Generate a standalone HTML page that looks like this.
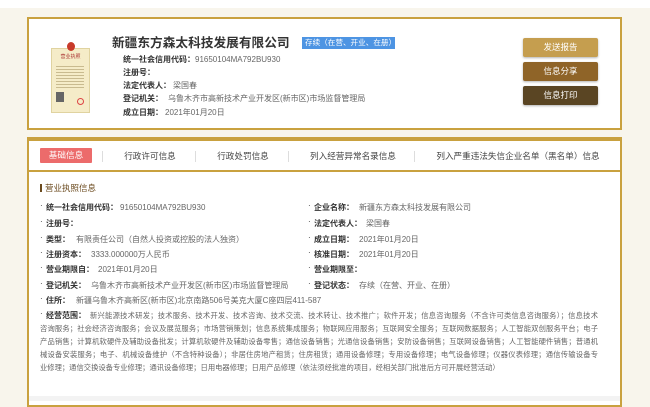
<!DOCTYPE html>
<html><head><meta charset="utf-8"><style>
*{margin:0;padding:0;box-sizing:border-box}
body{width:650px;height:401px;overflow:hidden;background:#f8f5ec;font-family:"Liberation Sans","Noto Sans CJK SC",sans-serif;color:#555;position:relative}
.top{position:absolute;left:0;top:0;width:650px;height:8px;background:#fff}
.c1{position:absolute;left:27px;top:17px;width:595px;height:113px;background:#fff;border:2px solid #c9a13f}
.c2{position:absolute;left:27px;top:137px;width:595px;height:270px;background:#fff;border:2px solid #c9a13f;border-top:4px solid #c9a13f}
.a{position:absolute;white-space:nowrap;font-size:8px;line-height:11px}
.b{font-weight:bold;color:#333}
.v{color:#666}
.btn{position:absolute;left:523px;width:75px;height:19px;color:#fff;font-size:8.5px;line-height:19px;text-align:center;border-radius:2px;box-shadow:0 1px 2px rgba(0,0,0,.3)}
.tab{position:absolute;top:151px;font-size:8.6px;line-height:11px;color:#444;white-space:nowrap;transform:translateX(-50%)}
.sep{position:absolute;top:151px;width:1px;height:11px;background:#ddd}
.sc{position:absolute;left:40px;width:558px;font-size:7.3px;line-height:13px;color:#666;text-align:justify;text-align-last:justify;white-space:nowrap;overflow:hidden}
.dot{position:absolute;font-size:8px;color:#333}
</style></head><body>
<div class="top"></div>
<div class="c1"></div>
<div class="c2"></div>
<div style="position:absolute;left:51px;top:48px;width:39px;height:65px;background:#f5ecc8;border:1px solid #e0d3a0"></div>
<div style="position:absolute;left:67px;top:42px;width:8px;height:9px;border-radius:50%;background:#c83a2a"></div>
<div style="position:absolute;left:56px;top:55px;width:29px;height:5px;font-size:5px;line-height:5px;color:#a33;text-align:center">营业执照</div>
<div style="position:absolute;left:56px;top:64px;width:28px;height:24px;background:repeating-linear-gradient(#f5ecc8 0 2px,#c9bb8f 2px 3px)"></div>
<div style="position:absolute;left:56px;top:92px;width:8px;height:10px;background:#666"></div>
<div style="position:absolute;left:77px;top:98px;width:7px;height:7px;border-radius:50%;border:1px solid #d44"></div>

<div class="a b" style="left:112px;top:35px;font-size:12.7px;line-height:17px;color:#333">新疆东方森太科技发展有限公司</div>
<div class="a" style="left:302px;top:37px;width:93px;height:12px;background:#4d94e3;color:#fff;font-size:7.6px;line-height:12px;padding-left:3px">存续（在营、开业、在册）</div>
<div class="a b" style="left:123px;top:54px">统一社会信用代码：</div><div class="a v" style="left:195px;top:54px">91650104MA792BU930</div>
<div class="a b" style="left:123px;top:67px">注册号：</div>
<div class="a b" style="left:123px;top:80px">法定代表人：</div><div class="a v" style="left:173px;top:80px">梁国春</div>
<div class="a b" style="left:123px;top:93px">登记机关：</div><div class="a v" style="left:168px;top:93px">乌鲁木齐市高新技术产业开发区(新市区)市场监督管理局</div>
<div class="a b" style="left:123px;top:107px">成立日期：</div><div class="a v" style="left:165px;top:107px">2021年01月20日</div>

<div class="btn" style="top:38px;background:#c59e4f">发送报告</div>
<div class="btn" style="top:62px;background:#8f6428">信息分享</div>
<div class="btn" style="top:86px;background:#5a4523">信息打印</div>

<div style="position:absolute;left:40px;top:148px;width:52px;height:15px;background:#ec6b6b;color:#fff;font-size:8.6px;line-height:15px;text-align:center;border-radius:1px">基础信息</div>
<div class="sep" style="left:102px"></div><div class="sep" style="left:195px"></div><div class="sep" style="left:288px"></div><div class="sep" style="left:414px"></div>
<div class="tab" style="left:150px">行政许可信息</div>
<div class="tab" style="left:243px">行政处罚信息</div>
<div class="tab" style="left:353px">列入经营异常名录信息</div>
<div class="tab" style="left:518px">列入严重违法失信企业名单（黑名单）信息</div>
<div style="position:absolute;left:29px;top:170px;width:591px;height:2px;background:#c9a13f"></div>

<div style="position:absolute;left:40px;top:184px;width:2px;height:8px;background:#6b4a1e"></div>
<div class="a" style="left:45px;top:183px;color:#6b4a1e;font-size:8.5px">营业执照信息</div>

<div class="dot" style="left:40px;top:201px">·</div><div class="a b" style="left:46px;top:202px">统一社会信用代码：</div><div class="a v" style="left:120px;top:202px">91650104MA792BU930</div>
<div class="dot" style="left:308px;top:201px">·</div><div class="a b" style="left:314px;top:202px">企业名称：</div><div class="a v" style="left:359px;top:202px">新疆东方森太科技发展有限公司</div>
<div class="dot" style="left:40px;top:217px">·</div><div class="a b" style="left:46px;top:218px">注册号：</div>
<div class="dot" style="left:308px;top:217px">·</div><div class="a b" style="left:314px;top:218px">法定代表人：</div><div class="a v" style="left:366px;top:218px">梁国春</div>
<div class="dot" style="left:40px;top:233px">·</div><div class="a b" style="left:46px;top:234px">类型：</div><div class="a v" style="left:76px;top:234px">有限责任公司（自然人投资或控股的法人独资）</div>
<div class="dot" style="left:308px;top:233px">·</div><div class="a b" style="left:314px;top:234px">成立日期：</div><div class="a v" style="left:359px;top:234px">2021年01月20日</div>
<div class="dot" style="left:40px;top:248px">·</div><div class="a b" style="left:46px;top:249px">注册资本：</div><div class="a v" style="left:91px;top:249px">3333.000000万人民币</div>
<div class="dot" style="left:308px;top:248px">·</div><div class="a b" style="left:314px;top:249px">核准日期：</div><div class="a v" style="left:359px;top:249px">2021年01月20日</div>
<div class="dot" style="left:40px;top:263px">·</div><div class="a b" style="left:46px;top:264px">营业期限自：</div><div class="a v" style="left:98px;top:264px">2021年01月20日</div>
<div class="dot" style="left:308px;top:263px">·</div><div class="a b" style="left:314px;top:264px">营业期限至：</div>
<div class="dot" style="left:40px;top:279px">·</div><div class="a b" style="left:46px;top:280px">登记机关：</div><div class="a v" style="left:91px;top:280px">乌鲁木齐市高新技术产业开发区(新市区)市场监督管理局</div>
<div class="dot" style="left:308px;top:279px">·</div><div class="a b" style="left:314px;top:280px">登记状态：</div><div class="a v" style="left:359px;top:280px">存续（在营、开业、在册）</div>
<div class="dot" style="left:40px;top:294px">·</div><div class="a b" style="left:46px;top:295px">住所：</div><div class="a v" style="left:76px;top:295px">新疆乌鲁木齐高新区(新市区)北京南路506号美克大厦C座四层411-587</div>

<div class="dot" style="left:40px;top:309px">·</div><div class="a b" style="left:46px;top:310px">经营范围：</div>
<div class="sc" style="top:309px;left:90px;width:508px">新兴能源技术研发；技术服务、技术开发、技术咨询、技术交流、技术转让、技术推广；软件开发；信息咨询服务（不含许可类信息咨询服务）；信息技术</div>
<div class="sc" style="top:322px">咨询服务；社会经济咨询服务；会议及展览服务；市场营销策划；信息系统集成服务；物联网应用服务；互联网安全服务；互联网数据服务；人工智能双创服务平台；电子</div>
<div class="sc" style="top:335px">产品销售；计算机软硬件及辅助设备批发；计算机软硬件及辅助设备零售；通信设备销售；光通信设备销售；安防设备销售；互联网设备销售；人工智能硬件销售；普通机</div>
<div class="sc" style="top:348px">械设备安装服务；电子、机械设备维护（不含特种设备）；非居住房地产租赁；住房租赁；通用设备修理；专用设备修理；电气设备修理；仪器仪表修理；通信传输设备专</div>
<div class="sc" style="top:361px;text-align-last:auto;width:auto">业修理；通信交换设备专业修理；通讯设备修理；日用电器修理；日用产品修理（依法须经批准的项目，经相关部门批准后方可开展经营活动）</div>
<div style="position:absolute;left:29px;top:396px;width:591px;height:5px;background:#f3f3f3"></div>
</body></html>
